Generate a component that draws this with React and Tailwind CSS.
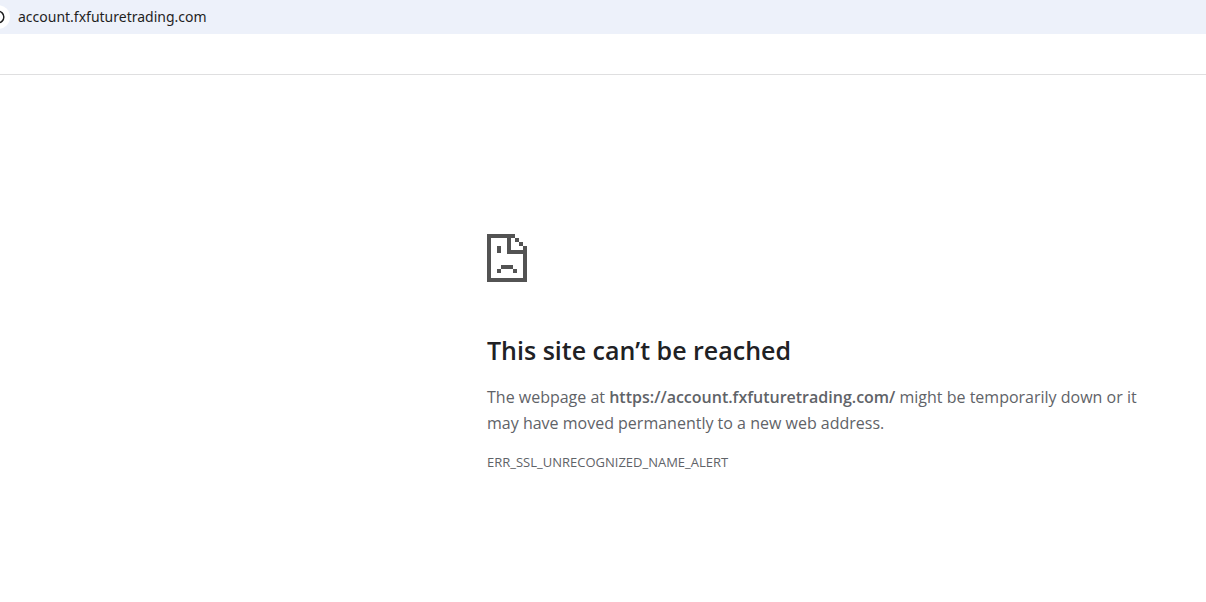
import { Info } from 'lucide-react'

const SadPageIcon = () => (
  <svg
    width="40"
    height="48"
    viewBox="0 0 40 48"
    fill="#535353"
    shapeRendering="crispEdges"
    aria-hidden="true"
  >
    {/* page outline */}
    <path d="M0 0H28V4H4V44H36V20H20V4H24V16H36V12H40V48H0Z" />
    {/* folded corner */}
    <path d="M28 4H32V8H28ZM32 8H36V12H32Z" />
    {/* face */}
    <path d="M10 12H14V19H10ZM14 31H26V35H14ZM10 35H14V39H10ZM26 35H30V39H26Z" />
  </svg>
)

const AddressBar = ({ url }) => (
  <header className="flex h-[34px] items-center gap-2 overflow-hidden bg-[#edf1fa]">
    <button
      type="button"
      aria-label="View site information"
      className="-ml-3.5 flex size-6 shrink-0 items-center justify-center rounded-full bg-white text-[#1f1f1f]"
    >
      <Info className="size-3.5" strokeWidth={2.5} />
    </button>
    <input
      type="text"
      aria-label="Address"
      defaultValue={url}
      className="min-w-0 flex-1 bg-transparent font-['Noto_Sans',sans-serif] text-sm text-[#1f1f1f] outline-none"
    />
  </header>
)

const ErrorPage = ({ url, code }) => (
  <main className="w-full max-w-[670px] text-[#5f6368]">
    <SadPageIcon />
    <h1 className="mt-12 text-[25px] leading-10 font-semibold text-[#202124]">
      This site can’t be reached
    </h1>
    <p className="mt-3.5 text-base leading-[26px]">
      The webpage at <strong className="font-semibold">{url}</strong> might be temporarily down or
      it may have moved permanently to a new web address.
    </p>
    <p className="mt-4 text-[13px] leading-5">{code}</p>
  </main>
)

export default function App() {
  return (
    <div className="min-h-screen bg-white font-['Open_Sans','Noto_Sans',sans-serif]">
      <AddressBar url="account.fxfuturetrading.com" />
      <div className="h-[41px] border-b border-[#dfdfe0]" />
      <div className="pt-[159px] pr-10 pl-[487px]">
        <ErrorPage url="https://account.fxfuturetrading.com/" code="ERR_SSL_UNRECOGNIZED_NAME_ALERT" />
      </div>
    </div>
  )
}
